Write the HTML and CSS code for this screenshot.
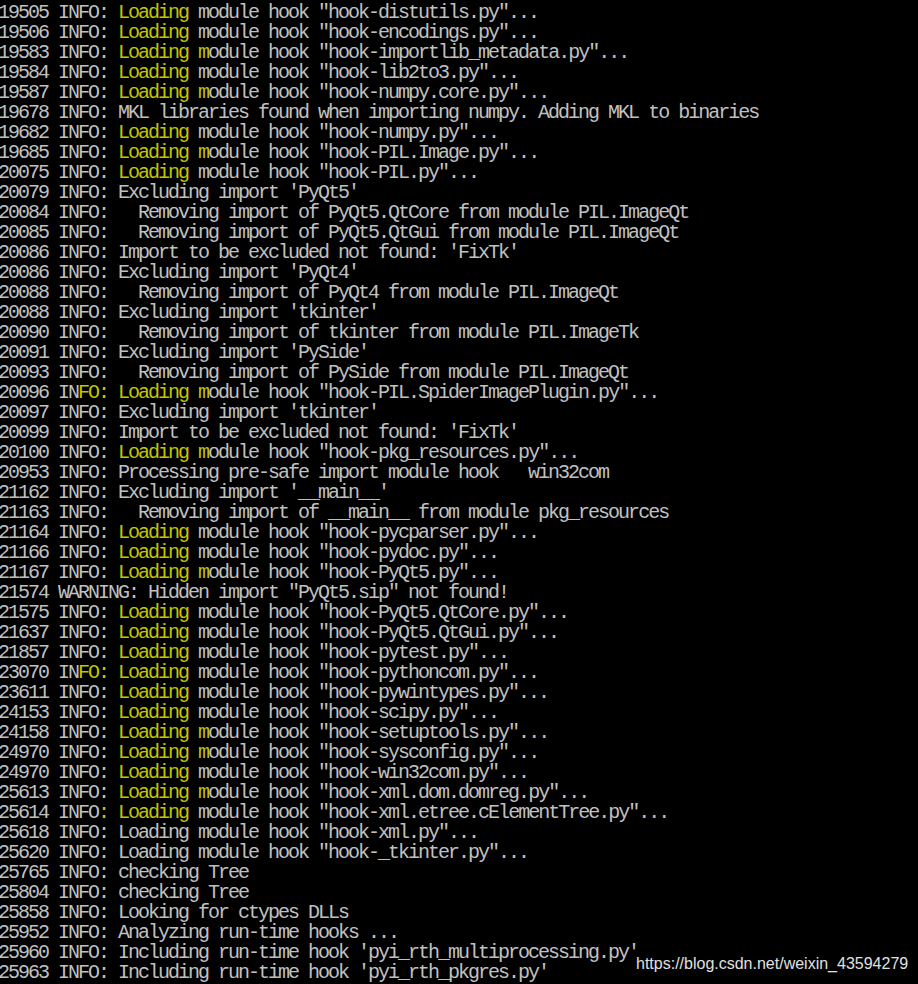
FILE: index.html
```html
<!DOCTYPE html>
<html>
<head>
<meta charset="utf-8">
<link rel="stylesheet" href="styles.css">
</head>
<body>
<div class="term">
<div class="ln">19505 INFO: <span class="y">Loading</span> module hook "hook-distutils.py"...</div>
<div class="ln">19506 INFO: <span class="y">Loading</span> module hook "hook-encodings.py"...</div>
<div class="ln">19583 INFO: <span class="y">Loading m</span>odule hook "hook-importlib_metadata.py"...</div>
<div class="ln">19584 INFO: <span class="y">Loading</span> module hook "hook-lib2to3.py"...</div>
<div class="ln">19587 INFO: <span class="y">Loading m</span>odule hook "hook-numpy.core.py"...</div>
<div class="ln">19678 INFO: MKL libraries found when importing numpy. Adding MKL to binaries</div>
<div class="ln">19682 INFO: <span class="y">Loading</span> module hook "hook-numpy.py"...</div>
<div class="ln">19685 INFO: <span class="y">Loading m</span>odule hook "hook-PIL.Image.py"...</div>
<div class="ln">20075 INFO: <span class="y">Loading</span> module hook "hook-PIL.py"...</div>
<div class="ln">20079 INFO: Excluding import 'PyQt5'</div>
<div class="ln">20084 INFO:   Removing import of PyQt5.QtCore from module PIL.ImageQt</div>
<div class="ln">20085 INFO:   Removing import of PyQt5.QtGui from module PIL.ImageQt</div>
<div class="ln">20086 INFO: Import to be excluded not found: 'FixTk'</div>
<div class="ln">20086 INFO: Excluding import 'PyQt4'</div>
<div class="ln">20088 INFO:   Removing import of PyQt4 from module PIL.ImageQt</div>
<div class="ln">20088 INFO: Excluding import 'tkinter'</div>
<div class="ln">20090 INFO:   Removing import of tkinter from module PIL.ImageTk</div>
<div class="ln">20091 INFO: Excluding import 'PySide'</div>
<div class="ln">20093 INFO:   Removing import of PySide from module PIL.ImageQt</div>
<div class="ln">20096 IN<span class="y">FO: Loading m</span>odule hook "hook-PIL.SpiderImagePlugin.py"...</div>
<div class="ln">20097 INFO: Excluding import 'tkinter'</div>
<div class="ln">20099 INFO: Import to be excluded not found: 'FixTk'</div>
<div class="ln">20100 INFO: <span class="y">Loading m</span>odule hook "hook-pkg_resources.py"...</div>
<div class="ln">20953 INFO: Processing pre-safe import module hook   win32com</div>
<div class="ln">21162 INFO: Excluding import '__main__'</div>
<div class="ln">21163 INFO:   Removing import of __main__ from module pkg_resources</div>
<div class="ln">21164 INFO: <span class="y">Loading</span> module hook "hook-pycparser.py"...</div>
<div class="ln">21166 INFO: <span class="y">Loading</span> module hook "hook-pydoc.py"...</div>
<div class="ln">21167 INFO: <span class="y">Loading m</span>odule hook "hook-PyQt5.py"...</div>
<div class="ln">21574 WARNING: Hidden import "PyQt5.sip" not found!</div>
<div class="ln">21575 INFO: <span class="y">Loading</span> module hook "hook-PyQt5.QtCore.py"...</div>
<div class="ln">21637 INFO: <span class="y">Loading</span> module hook "hook-PyQt5.QtGui.py"...</div>
<div class="ln">21857 INFO: <span class="y">Loading</span> module hook "hook-pytest.py"...</div>
<div class="ln">23070 IN<span class="y">FO: Loading</span> module hook "hook-pythoncom.py"...</div>
<div class="ln">23611 INFO: <span class="y">Loading</span> module hook "hook-pywintypes.py"...</div>
<div class="ln">24153 INFO: <span class="y">Loading</span> module hook "hook-scipy.py"...</div>
<div class="ln">24158 INFO: <span class="y">Loading m</span>odule hook "hook-setuptools.py"...</div>
<div class="ln">24970 INFO: <span class="y">Loading m</span>odule hook "hook-sysconfig.py"...</div>
<div class="ln">24970 INFO: <span class="y">Loading</span> module hook "hook-win32com.py"...</div>
<div class="ln">25613 INFO: <span class="y">Loading m</span>odule hook "hook-xml.dom.domreg.py"...</div>
<div class="ln">25614 INFO<span class="y">: Loading</span> module hook "hook-xml.etree.cElementTree.py"...</div>
<div class="ln">25618 INFO: Loading module hook "hook-xml.py"...</div>
<div class="ln">25620 INFO: Loading module hook "hook-_tkinter.py"...</div>
<div class="ln">25765 INFO: checking Tree</div>
<div class="ln">25804 INFO: checking Tree</div>
<div class="ln">25858 INFO: Looking for ctypes DLLs</div>
<div class="ln">25952 INFO: Analyzing run-time hooks ...</div>
<div class="ln">25960 INFO: Including run-time hook 'pyi_rth_multiprocessing.py'</div>
<div class="ln">25963 INFO: Including run-time hook 'pyi_rth_pkgres.py'</div>
</div>
<div class="mark">https://blog.csdn.net/weixin_43594279</div>
</body>
</html>
```
FILE: styles.css
```css
html, body {
  margin: 0;
  padding: 0;
  background: #000;
  height: 100%;
  overflow: hidden;
}
.term {
  padding: 3px 0 0 0;
  margin-left: -2px;
  font-family: "Liberation Mono", monospace;
  font-size: 20px;
  letter-spacing: -2px;
  line-height: 20px;
  color: #c0c0c0;
}
.ln {
  white-space: pre;
  height: 20px;
}
.y {
  color: #c4c400;
}
.mark {
  position: absolute;
  left: 636px;
  top: 954px;
  font-family: "Liberation Sans", Arial, sans-serif;
  font-size: 16px;
  line-height: 20px;
  color: #e0e0e0;
}
```
